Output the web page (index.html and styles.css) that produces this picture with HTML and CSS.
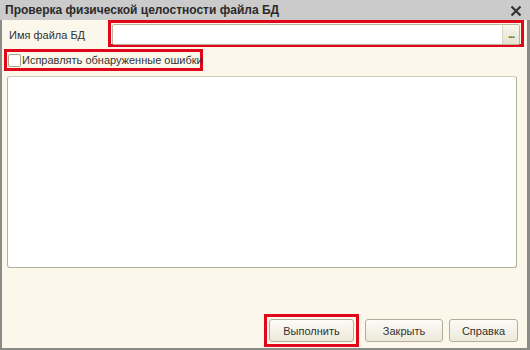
FILE: index.html
```html
<!DOCTYPE html>
<html>
<head>
<meta charset="utf-8">
<link rel="stylesheet" href="styles.css">
</head>
<body>
<div class="window">
  <div class="titlebar">
    <span class="title">Проверка физической целостности файла БД</span>
    <span class="close">
      <svg width="12" height="12" viewBox="0 0 12 12"><path d="M1.5 1.5L10.5 10.5M10.5 1.5L1.5 10.5" stroke="#333" stroke-width="2.2" fill="none"/></svg>
    </span>
  </div>
  <div class="content">
    <div class="row-file">
      <span class="label">Имя файла БД</span>
      <div class="hl hl-input">
        <div class="input">
          <span class="field"></span>
          <span class="dots">...</span>
        </div>
      </div>
    </div>
    <div class="row-check">
      <div class="hl hl-check">
        <span class="checkbox"></span>
        <span class="check-label">Исправлять обнаруженные ошибки</span>
      </div>
    </div>
    <div class="textarea"></div>
    <div class="buttons">
      <div class="hl hl-btn"><span class="btn">Выполнить</span></div>
      <span class="btn btn-close">Закрыть</span>
      <span class="btn btn-help">Справка</span>
    </div>
  </div>
</div>
</body>
</html>
```
FILE: styles.css
```css
html, body {
  margin: 0;
  padding: 0;
  width: 530px;
  height: 350px;
  overflow: hidden;
  font-family: "Liberation Sans", Arial, sans-serif;
}
.window {
  width: 530px;
  height: 350px;
  box-sizing: border-box;
  background: #fbf8eb;
  border-left: 2px solid #8a8a86;
  border-right: 3px solid #8a8a86;
  border-bottom: 2px solid #8a8a86;
  display: flex;
  flex-direction: column;
}
.titlebar {
  height: 20px;
  background: #cbcbcb;
  margin: 0 -3px 0 -2px;
  display: flex;
  align-items: center;
  justify-content: space-between;
  padding: 0 8px 0 5px;
}
.title {
  font-weight: bold;
  font-size: 12px;
  color: #2a2a2a;
  white-space: nowrap;
}
.close {
  display: flex;
  margin-top: 2px;
}
.content {
  flex: 1;
  display: flex;
  flex-direction: column;
  padding: 0 3px 0 2px;
}
.hl {
  border: 3px solid #e2061b;
  box-sizing: border-box;
}
.row-file {
  display: flex;
  align-items: center;
  height: 27px;
}
.label {
  font-size: 11px;
  color: #333;
  width: 104px;
  flex: none;
  box-sizing: border-box;
  padding-left: 5px;
  margin-top: 3px;
  white-space: nowrap;
}
.hl-input {
  flex: 1;
  height: 27px;
  padding: 1px 1px;
}
.input {
  display: flex;
  height: 19px;
  border: 1px solid #b9b49a;
  border-radius: 2px;
  background: #fff;
}
.field { flex: 1; }
.dots {
  width: 16px;
  border-left: 1px solid #d6d3c2;
  background: linear-gradient(#f7f6ee, #e6e3d2);
  color: #5a7a10;
  font-size: 11px;
  font-weight: bold;
  text-align: center;
  line-height: 18px;
  letter-spacing: -1px;
}
.row-check {
  display: flex;
  height: 25px;
  padding-top: 2px;
  box-sizing: border-box;
}
.hl-check {
  display: flex;
  align-items: center;
  width: 199px;
  height: 22px;
  padding-left: 1px;
}
.checkbox {
  flex: none;
  width: 11px;
  height: 11px;
  border: 1px solid #a9a58c;
  border-radius: 2px;
  background: #fff;
  margin-right: 1px;
}
.check-label {
  font-size: 11px;
  color: #333;
  white-space: nowrap;
}
.textarea {
  margin: 4px 7px 0 3px;
  height: 190px;
  background: #fff;
  border: 1px solid #b4b09a;
  border-top-color: #d0ccb8;
  border-radius: 3px;
}
.buttons {
  margin-top: auto;
  display: flex;
  justify-content: flex-end;
  align-items: center;
  padding: 0 6px 1px 0;
  gap: 6px;
}
.hl-btn {
  padding: 2px;
}
.btn {
  display: flex;
  align-items: center;
  justify-content: center;
  height: 23px;
  box-sizing: border-box;
  border: 1px solid #b1ad97;
  border-radius: 3px;
  background: linear-gradient(#fcfbf6, #ece9da);
  font-size: 11px;
  color: #333;
}
.hl-btn .btn { width: 85px; }
.btn-close { width: 78px; }
.btn-help { width: 69px; }
```
